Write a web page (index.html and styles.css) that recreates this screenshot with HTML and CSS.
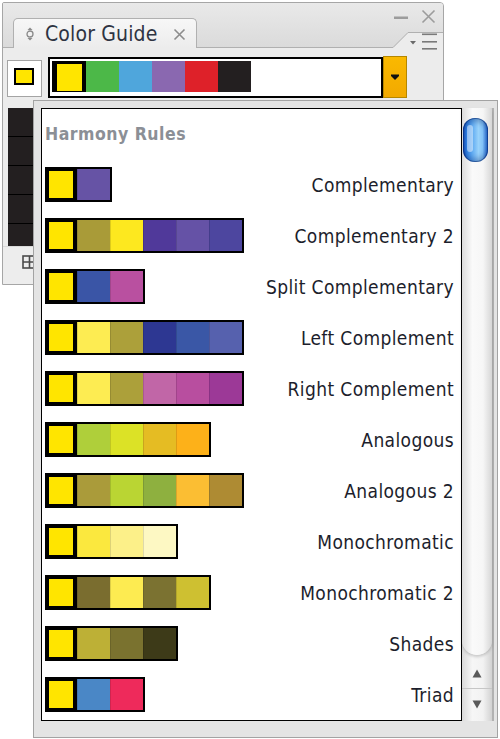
FILE: index.html
```html
<!DOCTYPE html>
<html>
<head>
<meta charset="utf-8">
<title>Color Guide</title>
<link rel="stylesheet" href="styles.css">
</head>
<body>
<div class="panel">
  <div class="tabstrip">
    <div class="gap"></div>
    <div class="tab">
      <svg class="tab-icon" width="12" height="14" viewBox="0 0 12 14">
        <path d="M6 0.5 L8.5 3 H3.5 Z" fill="#8a8a8a"/>
        <path d="M6 13.5 L3.5 11 H8.5 Z" fill="#8a8a8a"/>
        <circle cx="6" cy="7" r="3" fill="none" stroke="#8a8a8a" stroke-width="1.3"/>
      </svg>
      <span class="tab-title">Color Guide</span>
      <svg class="tab-close" width="13" height="13" viewBox="0 0 13 13">
        <path d="M1.5 1.5 L11.5 11.5 M11.5 1.5 L1.5 11.5" stroke="#8c8c8c" stroke-width="1.6" fill="none"/>
      </svg>
    </div>
    <div class="filler"></div>
    <svg class="corner" width="50" height="45" viewBox="0 0 50 45">
      <polygon points="0,45 15,30 50,30 50,45" fill="#ececec"/>
      <path d="M0 44.5 L15 29.5 L50 29.5" stroke="#b0b0b0" stroke-width="1" fill="none"/>
      <rect x="1" y="13.5" width="14" height="2.5" fill="#9c9c9c"/>
      <path d="M29.5 7.5 L41.5 19.5 M41.5 7.5 L29.5 19.5" stroke="#9c9c9c" stroke-width="1.6" fill="none"/>
      <polygon points="17,38 23,38 20,41.5" fill="#6a6a6a"/>
      <rect x="29" y="30.5" width="15" height="1.6" fill="#7a7a7a"/>
      <rect x="29" y="38" width="15" height="1.6" fill="#7a7a7a"/>
      <rect x="29" y="45" width="15" height="1.6" fill="#7a7a7a"/>
    </svg>
  </div>
  <div class="body">
    <div class="toprow">
      <div class="base-box"><div class="base-swatch"></div></div>
      <div class="strip">
        <div class="strip-row">
          <div class="first"></div>
          <div class="cell" style="background:#4cb848"></div>
          <div class="cell" style="background:#4fa6dc"></div>
          <div class="cell" style="background:#8a68b0"></div>
          <div class="cell" style="background:#de2129"></div>
          <div class="cell" style="background:#231f20"></div>
        </div>
      </div>
      <div class="dd-btn">
        <svg width="10" height="7" viewBox="0 0 10 7"><path d="M1 0.5 H9 V2 L5 6 L1 2 Z" fill="#111"/></svg>
      </div>
    </div>
    <div class="grid">
      <div class="grid-row"></div>
      <div class="grid-row"></div>
      <div class="grid-row"></div>
      <div class="grid-row"></div>
      <div class="grid-row"></div>
    </div>
    <div class="bottombar">
      <svg class="grid-icon" width="15" height="14" viewBox="0 0 15 14">
        <rect x="1" y="1" width="13" height="12" fill="none" stroke="#4a4a4a" stroke-width="1.6"/>
        <path d="M7.5 1 V13 M1 7 H14" stroke="#4a4a4a" stroke-width="1.6"/>
      </svg>
    </div>
  </div>
</div>

<div class="popup">
  <div class="list">
    <div class="list-title">Harmony Rules</div>

    <div class="rule">
      <div class="sw"><div class="first"></div>
        <div class="cell" style="background:#6653a5"></div>
      </div>
      <span class="label">Complementary</span>
    </div>

    <div class="rule">
      <div class="sw"><div class="first"></div>
        <div class="cell" style="background:#a99b38"></div>
        <div class="cell" style="background:#fde81f"></div>
        <div class="cell" style="background:#50399a"></div>
        <div class="cell" style="background:#6552a6"></div>
        <div class="cell" style="background:#4d469f"></div>
      </div>
      <span class="label">Complementary 2</span>
    </div>

    <div class="rule">
      <div class="sw"><div class="first"></div>
        <div class="cell" style="background:#3a55a6"></div>
        <div class="cell" style="background:#b950a0"></div>
      </div>
      <span class="label">Split Complementary</span>
    </div>

    <div class="rule">
      <div class="sw"><div class="first"></div>
        <div class="cell" style="background:#fdec52"></div>
        <div class="cell" style="background:#aca03a"></div>
        <div class="cell" style="background:#2d3792"></div>
        <div class="cell" style="background:#3a57a6"></div>
        <div class="cell" style="background:#5661ae"></div>
      </div>
      <span class="label">Left Complement</span>
    </div>

    <div class="rule">
      <div class="sw"><div class="first"></div>
        <div class="cell" style="background:#fdec52"></div>
        <div class="cell" style="background:#aca03a"></div>
        <div class="cell" style="background:#c166a7"></div>
        <div class="cell" style="background:#b84e9f"></div>
        <div class="cell" style="background:#9c3997"></div>
      </div>
      <span class="label">Right Complement</span>
    </div>

    <div class="rule">
      <div class="sw"><div class="first"></div>
        <div class="cell" style="background:#afcf3a"></div>
        <div class="cell" style="background:#dce226"></div>
        <div class="cell" style="background:#e5bc23"></div>
        <div class="cell" style="background:#fdb119"></div>
      </div>
      <span class="label">Analogous</span>
    </div>

    <div class="rule">
      <div class="sw"><div class="first"></div>
        <div class="cell" style="background:#aa9b3a"></div>
        <div class="cell" style="background:#bad533"></div>
        <div class="cell" style="background:#8eb03f"></div>
        <div class="cell" style="background:#fbbe33"></div>
        <div class="cell" style="background:#ae8b33"></div>
      </div>
      <span class="label">Analogous 2</span>
    </div>

    <div class="rule">
      <div class="sw"><div class="first"></div>
        <div class="cell" style="background:#fbe83e"></div>
        <div class="cell" style="background:#fcf089"></div>
        <div class="cell" style="background:#fdf8c3"></div>
      </div>
      <span class="label">Monochromatic</span>
    </div>

    <div class="rule">
      <div class="sw"><div class="first"></div>
        <div class="cell" style="background:#7a6d2f"></div>
        <div class="cell" style="background:#fdeb51"></div>
        <div class="cell" style="background:#7b7231"></div>
        <div class="cell" style="background:#cec031"></div>
      </div>
      <span class="label">Monochromatic 2</span>
    </div>

    <div class="rule">
      <div class="sw"><div class="first"></div>
        <div class="cell" style="background:#bdb036"></div>
        <div class="cell" style="background:#7a722f"></div>
        <div class="cell" style="background:#3d3a18"></div>
      </div>
      <span class="label">Shades</span>
    </div>

    <div class="rule">
      <div class="sw"><div class="first"></div>
        <div class="cell" style="background:#4a87c6"></div>
        <div class="cell" style="background:#ee2a5b"></div>
      </div>
      <span class="label">Triad</span>
    </div>
  </div>

  <div class="scrollbar">
    <div class="track">
      <div class="thumb"><div class="shine"></div></div>
    </div>
    <div class="arrow up">
      <svg width="10" height="9" viewBox="0 0 10 9"><path d="M5 0.5 L9.5 8.5 H0.5 Z" fill="#5a5a5a"/></svg>
    </div>
    <div class="arrow down">
      <svg width="10" height="9" viewBox="0 0 10 9"><path d="M0.5 0.5 H9.5 L5 8.5 Z" fill="#5a5a5a"/></svg>
    </div>
  </div>
</div>
</body>
</html>
```

FILE: styles.css
```css
* { box-sizing: border-box; }

html, body {
  margin: 0;
  padding: 0;
  background: #ffffff;
}

body {
  width: 500px;
  height: 739px;
  position: relative;
  overflow: hidden;
  font-family: "DejaVu Sans Condensed", "DejaVu Sans", sans-serif;
}

svg { display: block; overflow: visible; }

/* ---------- Panel ---------- */
.panel {
  margin: 2px 0 0 2px;
  width: 442px;
  height: 283px;
  border: 1px solid #a6a6a6;
  border-radius: 2px 4px 0 0;
  background: #ececec;
  display: flex;
  flex-direction: column;
  overflow: hidden;
}

.tabstrip {
  flex: none;
  height: 45px;
  display: flex;
  align-items: flex-end;
  background: linear-gradient(#e9e9e9, #dadada);
}

.gap {
  width: 10px;
  height: 1px;
  background: #b0b0b0;
}

.tab {
  width: 184px;
  height: 30px;
  border: 1px solid #b0b0b0;
  border-bottom: none;
  border-radius: 5px 5px 0 0;
  background: linear-gradient(#f7f7f7, #ececec);
  display: flex;
  align-items: center;
  padding: 1px 10px 0 10px;
}

.tab-title {
  margin-left: 9px;
  font-size: 21px;
  line-height: 28px;
  letter-spacing: 0.15px;
  color: #2e3442;
  white-space: nowrap;
}

.tab-close { margin-left: auto; }

.filler {
  flex: 1;
  height: 1px;
  background: #b0b0b0;
}

.corner { flex: none; }

.body {
  flex: 1;
  display: flex;
  flex-direction: column;
}

.toprow {
  display: flex;
  margin-top: 8px;
  height: 42px;
  padding-left: 4px;
}

.base-box {
  width: 35px;
  height: 37px;
  margin-top: 4px;
  border: 1px solid #a4a4a4;
  background: #ffffff;
}

.base-swatch {
  width: 20px;
  height: 17px;
  margin: 7px 0 0 6px;
  border: 2px solid #000;
  background: #ffe500;
}

.strip {
  margin: 1px 0 0 6px;
  width: 335px;
  height: 41px;
  border: 2px solid #000;
  background: #ffffff;
  padding: 2px 0 0 2px;
}

.strip-row {
  display: flex;
  height: 31px;
  width: fit-content;
  background: #000;
}

.strip-row .first {
  width: 25px;
  height: 27px;
  margin: 3px 4px 1px 5px;
  background: #ffe500;
}

.strip-row .cell {
  width: 33px;
  height: 31px;
}

.dd-btn {
  width: 24px;
  height: 42px;
  border: 1px solid #b58700;
  background: linear-gradient(#fab900, #f2a900);
  display: flex;
  align-items: center;
  justify-content: center;
}

.grid {
  margin: 10px 0 0 5px;
  width: 80px;
  height: 138px;
  overflow: hidden;
  display: flex;
  flex-direction: column;
  gap: 1px;
  background: #000;
}

.grid-row {
  flex: none;
  height: 28px;
  background: #231f20;
}

.bottombar {
  flex: 1;
  background: #ededed;
  border-top: 1px solid #dadada;
  padding: 8px 0 0 19px;
}

/* ---------- Popup ---------- */
.popup {
  position: absolute;
  left: 33px;
  top: 100px;
  width: 465px;
  height: 638px;
  border: 1px solid #a3a3a3;
  background: #e4e4e4;
  padding: 7px 3px 16px 7px;
  display: flex;
}

.list {
  width: 421px;
  height: 613px;
  border: 1px solid #000;
  background: #ffffff;
  padding: 15px 7px 0 3px;
  overflow: hidden;
}

.list-title {
  font-weight: bold;
  font-size: 17.5px;
  line-height: 20px;
  height: 20px;
  margin-bottom: 23px;
  letter-spacing: 0.5px;
  color: #8b8f96;
  white-space: nowrap;
}

.rule {
  display: flex;
  align-items: center;
  justify-content: space-between;
  height: 35px;
  margin-bottom: 16px;
}

.sw {
  display: flex;
  height: 35px;
  border: 2px solid #000;
  background: #000;
}

.sw .first {
  width: 24px;
  height: 27px;
  margin: 2px 4px 2px 2px;
  background: #ffe500;
}

.sw .cell {
  width: 33px;
  height: 31px;
  box-shadow: inset 1px 0 0 rgba(0, 0, 0, 0.12);
}

.label {
  font-size: 19px;
  letter-spacing: 0.38px;
  color: #1c1e2c;
  white-space: nowrap;
}

/* ---------- Scrollbar ---------- */
.scrollbar {
  width: 32px;
  height: 613px;
  display: flex;
  flex-direction: column;
  border-right: 2px solid #b2b2b2;
  background: linear-gradient(to right, #d9d9d9, #f6f6f6 35%, #f2f2f2 70%, #d2d2d2);
}

.track {
  flex: none;
  height: 547px;
  border-radius: 3px 3px 15px 15px;
  background: linear-gradient(to right, #dcdcdc, #fafafa 35%, #f6f6f6 70%, #d6d6d6);
  box-shadow: 0 2px 3px rgba(0, 0, 0, 0.18);
  padding: 10px 0 0 1px;
}

.thumb {
  width: 25px;
  height: 44px;
  border-radius: 12px;
  background: linear-gradient(to right, #1656c4 0%, #3486e6 16%, #63adf2 38%, #98d2fb 62%, #82c2f7 78%, #2068d3 100%);
  box-shadow: inset 0 0 0 1px rgba(0, 35, 110, 0.5), inset 0 4px 5px rgba(0, 30, 100, 0.3), inset 0 -4px 5px rgba(0, 30, 100, 0.28);
  padding: 7px 0 0 4px;
}

.shine {
  width: 6px;
  height: 27px;
  border-radius: 3px;
  background: rgba(255, 255, 255, 0.45);
}

.arrow {
  flex: none;
  display: flex;
  justify-content: center;
}

.arrow.up {
  height: 34px;
  padding-top: 14px;
  border-bottom: 1px solid #c6c6c6;
}

.arrow.down {
  height: 32px;
  padding-top: 11px;
}
```
